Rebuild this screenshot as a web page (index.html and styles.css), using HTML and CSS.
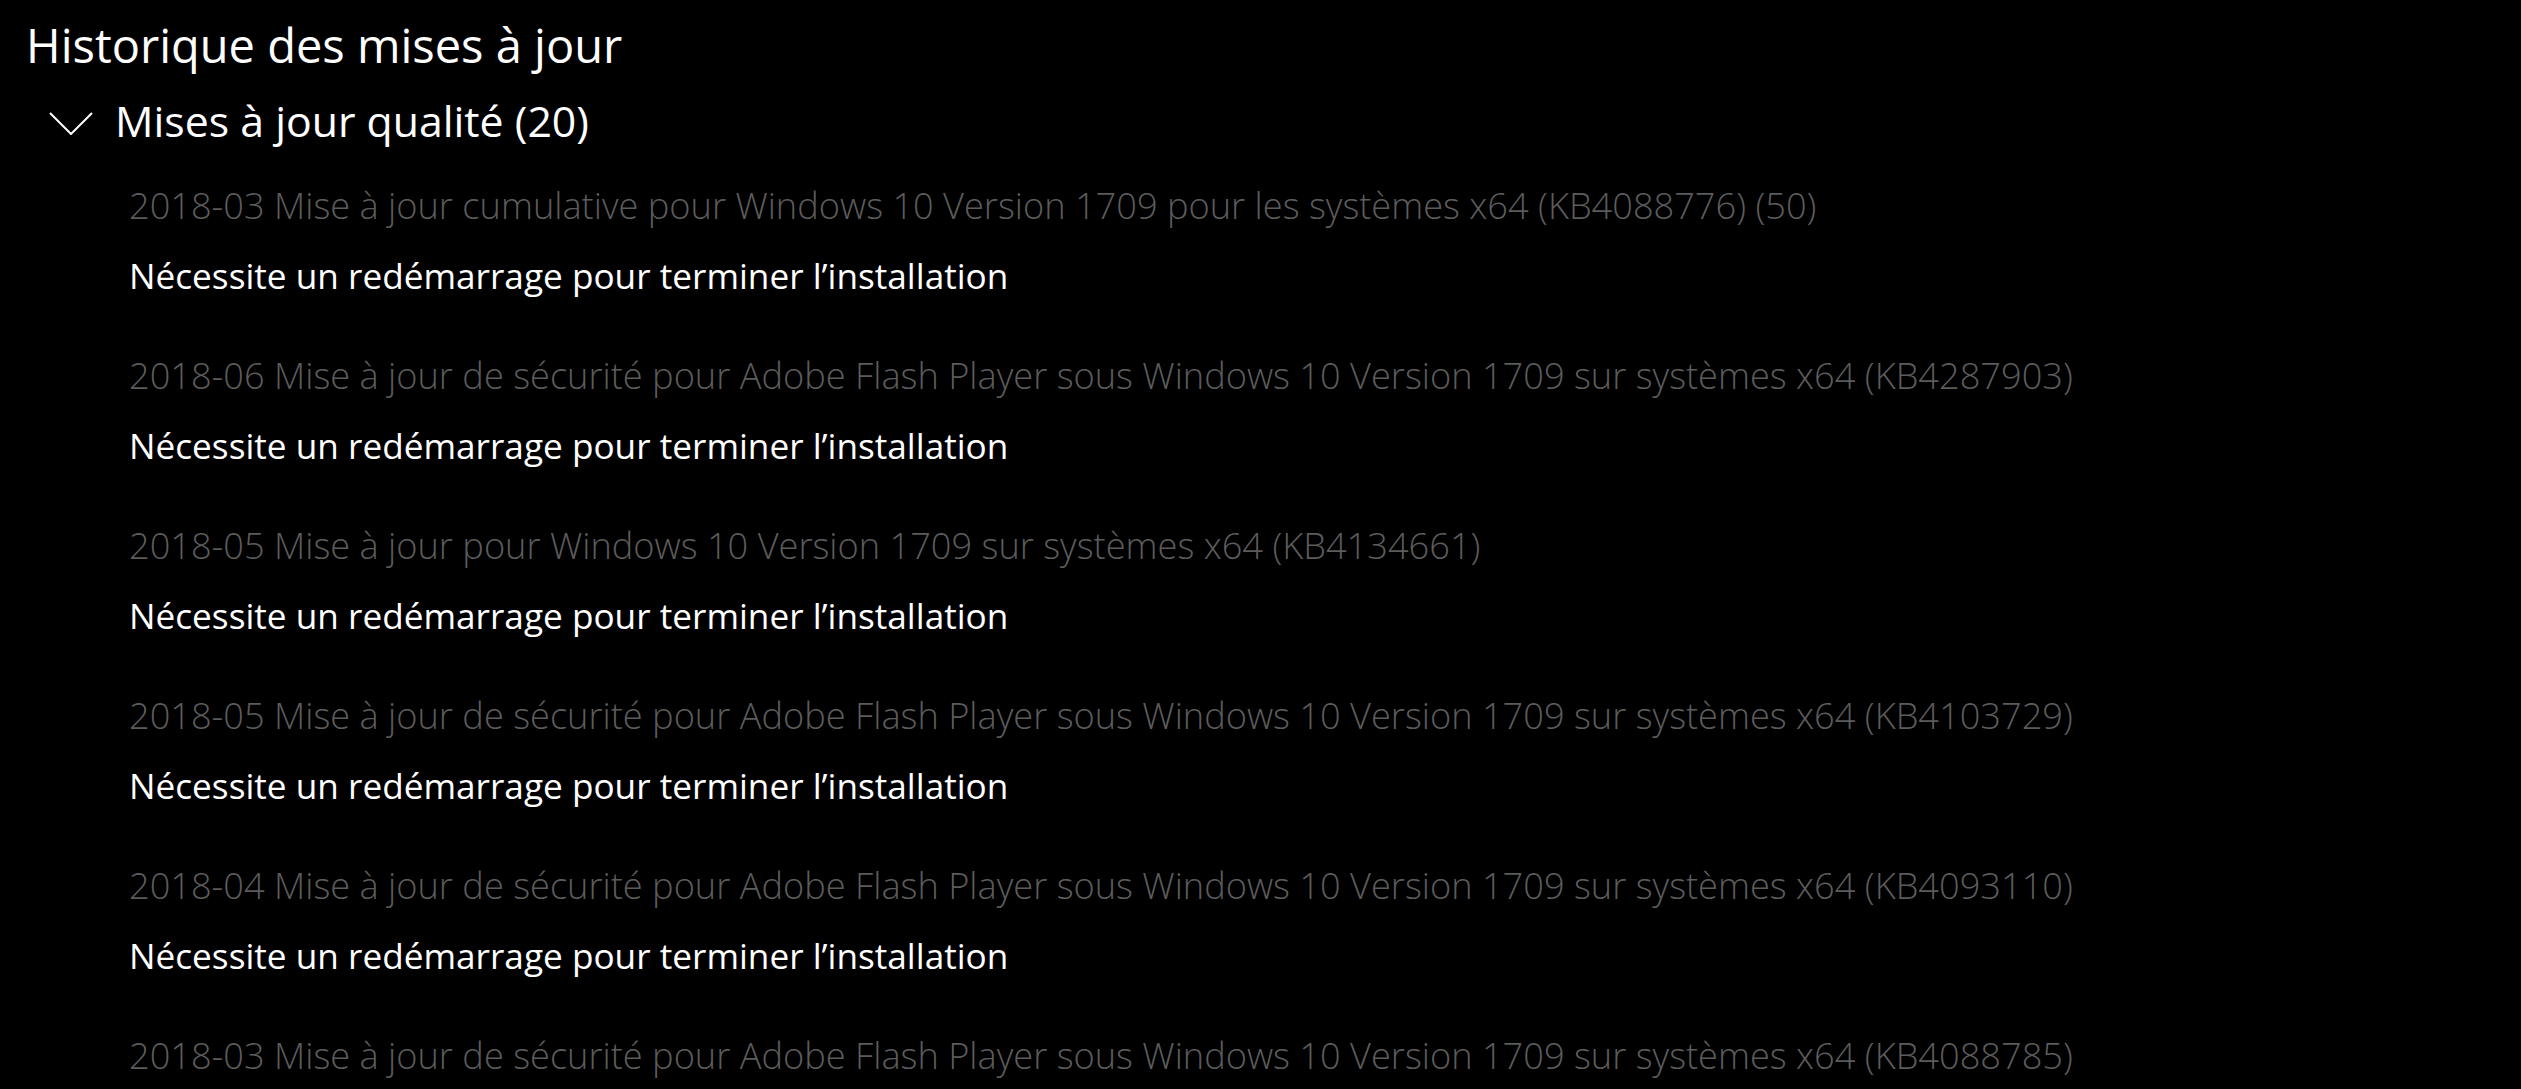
FILE: index.html
```html
<!DOCTYPE html>
<html lang="fr">
<head>
  <meta charset="UTF-8" />
  <meta name="viewport" content="width=device-width, initial-scale=1.0"/>
  <title>Historique des mises à jour</title>
  <link rel="stylesheet" href="styles.css">
</head>
<body>

  <h1 class="page-title">Historique des mises à jour</h1>

  <section class="group">
    <div class="group-header">
      <svg class="chevron" width="44" height="23" viewBox="0 0 44 23">
        <polyline points="1,1 22,22 43,1" fill="none" stroke="#fff" stroke-width="2"/>
      </svg>
      <span>Mises à jour qualité (20)</span>
    </div>

    <ul class="updates">
      <li class="update">
        <div class="update-name">2018-03 Mise à jour cumulative pour Windows 10 Version 1709 pour les systèmes x64 (KB4088776) (50)</div>
        <div class="update-status">Nécessite un redémarrage pour terminer l’installation</div>
      </li>
      <li class="update">
        <div class="update-name">2018-06 Mise à jour de sécurité pour Adobe Flash Player sous Windows 10 Version 1709 sur systèmes x64 (KB4287903)</div>
        <div class="update-status">Nécessite un redémarrage pour terminer l’installation</div>
      </li>
      <li class="update">
        <div class="update-name">2018-05 Mise à jour pour Windows 10 Version 1709 sur systèmes x64 (KB4134661)</div>
        <div class="update-status">Nécessite un redémarrage pour terminer l’installation</div>
      </li>
      <li class="update">
        <div class="update-name">2018-05 Mise à jour de sécurité pour Adobe Flash Player sous Windows 10 Version 1709 sur systèmes x64 (KB4103729)</div>
        <div class="update-status">Nécessite un redémarrage pour terminer l’installation</div>
      </li>
      <li class="update">
        <div class="update-name">2018-04 Mise à jour de sécurité pour Adobe Flash Player sous Windows 10 Version 1709 sur systèmes x64 (KB4093110)</div>
        <div class="update-status">Nécessite un redémarrage pour terminer l’installation</div>
      </li>
      <li class="update">
        <div class="update-name">2018-03 Mise à jour de sécurité pour Adobe Flash Player sous Windows 10 Version 1709 sur systèmes x64 (KB4088785)</div>
      </li>
    </ul>
  </section>

</body>
</html>
```

FILE: styles.css
```css
body {
  font-family: 'Open Sans', 'Noto Sans', sans-serif;
  margin: 0;
  padding: 0;
  background: #000;
  color: #fff;
  overflow: hidden;
  height: 1089px;
}

.page-title {
  margin: 0;
  padding: 10px 0 0 26px;
  font-size: 47px;
  font-weight: 400;
  line-height: 70px;
  white-space: nowrap;
}

.group-header {
  display: flex;
  align-items: center;
  margin-top: 13px;
  padding-left: 49px;
  font-size: 42.8px;
  line-height: 56px;
  white-space: nowrap;
}

.chevron {
  flex: none;
  margin-right: 22px;
  margin-top: 4px;
}

.updates {
  list-style: none;
  margin: 0;
  padding: 34px 0 0 129px;
  display: flex;
  flex-direction: column;
  gap: 56px;
}

.update-name {
  font-size: 36.2px;
  font-weight: 300;
  line-height: 44px;
  color: #5c5c5c;
  white-space: nowrap;
}

.update-status {
  margin-top: 26px;
  font-size: 35.2px;
  line-height: 44px;
  white-space: nowrap;
}
```
